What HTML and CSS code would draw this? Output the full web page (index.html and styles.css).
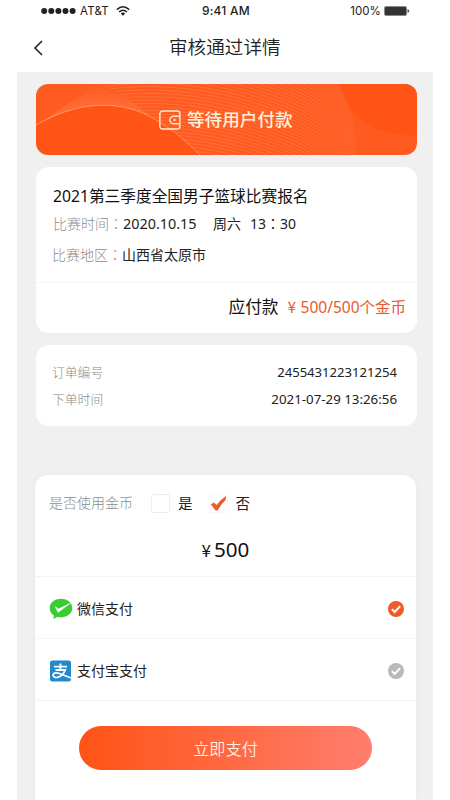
FILE: index.html
```html
<!DOCTYPE html>
<html lang="zh-CN">
<head>
<meta charset="utf-8">
<title>审核通过详情</title>
<link rel="stylesheet" href="styles.css">
</head>
<body>
<header class="status">
  <div class="carrier">
    <svg width="35" height="8" viewBox="0 0 35 8" fill="#222"><circle cx="3.2" cy="4" r="3"/><circle cx="10.3" cy="4" r="3"/><circle cx="17.4" cy="4" r="3"/><circle cx="24.5" cy="4" r="3"/><circle cx="31.6" cy="4" r="3"/></svg>
    <span class="carrier-name">AT&amp;T</span>
    <svg class="wifi" width="14" height="10" viewBox="0 0 14 10" fill="none" stroke="#222" stroke-width="1.5"><path d="M.8 3.6Q7-2 13.2 3.6M3 6Q7 2.500 11 6"/><path d="M4.800 7.400Q7 5.800 9.200 7.400L7 9.800z" fill="#222" stroke="none"/></svg>
  </div>
  <span class="clock">9:41 AM</span>
  <div class="power">
    <span>100%</span>
    <svg width="26" height="10" viewBox="0 0 26 10"><rect x=".5" y=".5" width="22" height="9" rx="1.5" fill="#333" stroke="#888"/><path d="M23.5 3q1.8.4 1.8 2t-1.8 2z" fill="#555"/></svg>
  </div>
</header>
<nav class="navbar">
  <svg class="back" width="10" height="16" viewBox="0 0 10 16" fill="none" stroke="#222" stroke-width="1.6"><path d="M9 1 2 8l7 7"/></svg>
  <h1>审核通过详情</h1>
</nav>
<main class="page">
  <section class="banner">
    <svg class="waves" width="381" height="72" viewBox="0 0 381 72">
      <defs>
        <linearGradient id="g" x1="0" y1="0" x2="0" y2="1"><stop offset="0" stop-color="#fff" stop-opacity=".02"/><stop offset="1" stop-color="#fff" stop-opacity=".16"/></linearGradient>
        <clipPath id="area"><path d="M62 0Q90 12 113 32Q140 46 165 72H320Q320 30 303 0z"/></clipPath>
      </defs>
      <path d="M0 41C40 18 80 15 113 32Q140 46 165 72H381V0H0z" fill="#fff" fill-opacity=".045"/>
      <path d="M0 41C16 33 30 18 60 3Q90 10 113 32C80 15 40 18 0 41z" fill="url(#g)"/>
      <path d="M0 41C40 18 80 15 113 32Q140 46 165 72" fill="none" stroke="#ffad88" stroke-opacity=".7"/>
      <path d="M303 0C308 28 336 54 381 51V0z" fill="#ff5416"/>
      <g id="lines" clip-path="url(#area)" fill="none" stroke="#ff9a70" stroke-opacity=".42" stroke-width=".8"></g>
    </svg>
    <div class="banner-label">
      <svg width="22" height="20" viewBox="0 0 22 20" fill="none" stroke="#ffe9d2" stroke-width="1.4"><rect x=".9" y="1" width="20" height="18" rx="2.600"/><path d="M20.900 6.300h-6.400a3.700 3.700 0 0 0 0 7.400h6.400"/><path d="M14.200 10h2.600"/></svg>
      <span>等待用户付款</span>
    </div>
  </section>
  <section class="card match">
    <div class="match-info">
      <h2>2021第三季度全国男子篮球比赛报名</h2>
      <p class="row"><span class="muted">比赛时间<span class="colon" lang="zh-TW">：</span></span><span class="date">2020.10.15</span><span class="day">周六</span><span>13<span class="colon" lang="zh-TW">：</span>30</span></p>
      <p class="row place"><span class="muted">比赛地区<span class="colon" lang="zh-TW">：</span></span><span>山西省太原市</span></p>
    </div>
    <div class="due"><span>应付款</span><span class="due-price"><span class="yen">¥</span>500/500个金币</span></div>
  </section>
  <section class="card order">
    <div class="order-row"><span class="muted">订单编号</span><span class="number">2455431223121254</span></div>
    <div class="order-row"><span class="muted">下单时间</span><span class="time">2021-07-29 13:26:56</span></div>
  </section>
  <section class="pay">
    <div class="coins">
      <span class="muted">是否使用金币</span>
      <span class="box"></span><span class="opt">是</span>
      <span class="box on"><svg width="18" height="18" viewBox="0 0 18 18"><path d="M.8 9.600 3.800 7.600 6.600 10Q10.500 4.500 16 1L15.600 5Q11 9 7.600 15.400H5.600z" fill="#ed5a2b"/></svg></span><span class="opt">否</span>
    </div>
    <div class="amount"><span class="amount-yen">¥</span>500</div>
    <div class="method">
      <svg width="24" height="22" viewBox="0 0 24 22"><path d="M12 .8C5.600.8.7 4.900.7 10.200c0 3 1.600 5.600 4.200 7.400L4.300 21l4-2.100c1.200.3 2.400.5 3.700.5 6.400 0 11.300-4.100 11.300-9.300S18.400.8 12 .8z" fill="#3bcb32"/><path d="M6.400 8.700 9.600 11 21.300 5.300 9.100 14.300z" fill="#fff" stroke="#fff" stroke-width=".6"/></svg>
      <span>微信支付</span>
      <svg class="mark" width="16" height="16" viewBox="0 0 16 16"><circle cx="8" cy="8" r="8" fill="#ed5b29"/><path d="m3.900 8.100 2.700 2.900 5.600-5.800" fill="none" stroke="#fff" stroke-width="1.900"/></svg>
    </div>
    <div class="method second">
      <svg width="24" height="22" viewBox="0 0 24 22"><rect x="1" y=".5" width="21" height="21" rx="2.500" fill="#2189cc"/><path d="M5 6.700h13M11.500 3.500v6.500M6.500 10h9.700Q14 15.800 9.200 17.200C6 18 4 16.700 4.100 14.900 4.300 12.700 7.500 12.300 10.500 13.500L22 18" fill="none" stroke="#fff" stroke-width="1.800"/></svg>
      <span>支付宝支付</span>
      <svg class="mark" width="16" height="16" viewBox="0 0 16 16"><circle cx="8" cy="8" r="8" fill="#b9b9b9"/><path d="m3.900 8.100 2.700 2.900 5.600-5.800" fill="none" stroke="#fff" stroke-width="1.900"/></svg>
    </div>
    <div class="submit"><button>立即支付</button></div>
  </section>
</main>
<script src="waves.js"></script>
</body>
</html>
```
FILE: styles.css
```css
* { box-sizing: border-box; margin: 0; padding: 0; }
body { width: 450px; height: 800px; overflow: hidden; background: #fff; color: #222; font: 14px/20px "Noto Sans", "Noto Sans CJK SC", sans-serif; }
svg { display: block; flex: none; }
.status { display: grid; grid-template-columns: 160px 1fr 160px; align-items: center; height: 22px; padding: 0 41px; font: 11.5px/22px Inter, "Noto Sans", sans-serif; }
.carrier, .power { display: flex; align-items: center; }
.carrier-name { margin: 0 7px 0 4px; letter-spacing: .2px; }
.clock { font-weight: 500; font-size: 12px; letter-spacing: .2px; margin-left: 1px; white-space: nowrap; }
.power { justify-content: flex-end; gap: 3px; }
.navbar { display: flex; align-items: center; height: 50px; padding-left: 33px; }
.navbar .back { position: relative; top: 1px; }
.navbar h1 { margin-left: 126px; font-size: 18.600px; line-height: 28px; font-weight: 350; }
.page { width: 416px; height: 728px; margin-left: 17px; padding: 12px 16px 0 19px; background: #f0f0f0; }
.banner { position: relative; height: 71px; border-radius: 12px; overflow: hidden; background: #ff5416; }
.waves { position: absolute; inset: 0; }
.banner-label { position: relative; display: flex; align-items: center; height: 71px; padding-left: 123px; gap: 6px; color: #fff0df; font-size: 17.600px; font-weight: 500; }
.banner-label span { margin-top: -1px; }
.card { background: #fff; border-radius: 13px; }
.match { margin-top: 12px; height: 166px; }
.match-info { height: 116px; padding: 18px 17px 0; border-bottom: 1px solid #f4f4f4; }
.match h2 { font-size: 15.700px; line-height: 22px; font-weight: 400; color: #111; white-space: nowrap; }
.row { display: flex; margin-top: 7px; line-height: 20px; white-space: nowrap; }
.row.place { margin: 11px 0 0 -1px; }
.colon { font-family: "Noto Sans CJK TC", sans-serif; line-height: 1; }
.muted { color: #8c8c8c; font-weight: 300; }
.date { width: 90px; font-size: 14.400px; }
.day { width: 37px; }
.due { display: flex; justify-content: flex-end; align-items: center; height: 48px; padding-right: 11px; gap: 9px; font-size: 16.700px; color: #111; }
.due-price { margin-top: -1px; font-size: 15.500px; color: #e85a2d; }
.yen { display: inline-block; width: 13px; font-family: "Noto Sans CJK SC", sans-serif; line-height: 1; }
.order { margin-top: 12px; height: 81px; padding: 13px 20px 0 16px; font-size: 12.800px; }
.order-row { display: flex; justify-content: space-between; height: 27px; line-height: 28px; }
.number { font-size: 13.100px; }
.time { font-size: 13.300px; }
.pay { width: 381px; height: 325px; margin: 49px 0 0 -1px; background: #fff; border-radius: 13px 13px 0 0; box-shadow: 0 0 8px rgba(0,0,0,.03); }
.coins { display: flex; align-items: center; height: 56px; padding-left: 14px; }
.box { width: 19px; height: 19px; margin-left: 18px; border: 1px solid #eee; border-radius: 2px; }
.box.on { margin-left: 16px; border-color: #f8f8f8; }
.opt { margin-left: 8px; font-size: 14.500px; }
.amount { display: flex; align-items: baseline; justify-content: center; height: 46px; font-size: 20.600px; line-height: 36px; color: #111; gap: 3px; border-bottom: 1px solid #f4f4f4; }
.amount-yen { font: 17px/36px "Noto Sans CJK SC", sans-serif; }
.method { display: flex; align-items: center; height: 62px; padding: 3px 12px 0 14px; gap: 4px; border-bottom: 1px solid #f4f4f4; }
.mark { margin-left: auto; }
.submit { padding: 25px 0 0 44px; }
.submit button { display: block; width: 293px; height: 44px; border: 0; border-radius: 22px; background: linear-gradient(90deg, #ff5315, #ff7e6e); color: #fff0df; font: 350 16.200px/44px "Noto Sans CJK SC", sans-serif; }
```
FILE: waves.js
```js
// Fine contour lines sweeping across the banner.
const group = document.getElementById('lines');
for (let i = 0; i < 42; i++) {
  const path = document.createElementNS('http://www.w3.org/2000/svg', 'path');
  const y = -70 + i * 3.4;
  path.setAttribute('d', `M60 ${y + 6} C110 ${y - 4} 170 ${y + 2} 220 ${y + 18} S290 ${y + 44} 325 ${y + 86}`);
  group.appendChild(path);
}
```
